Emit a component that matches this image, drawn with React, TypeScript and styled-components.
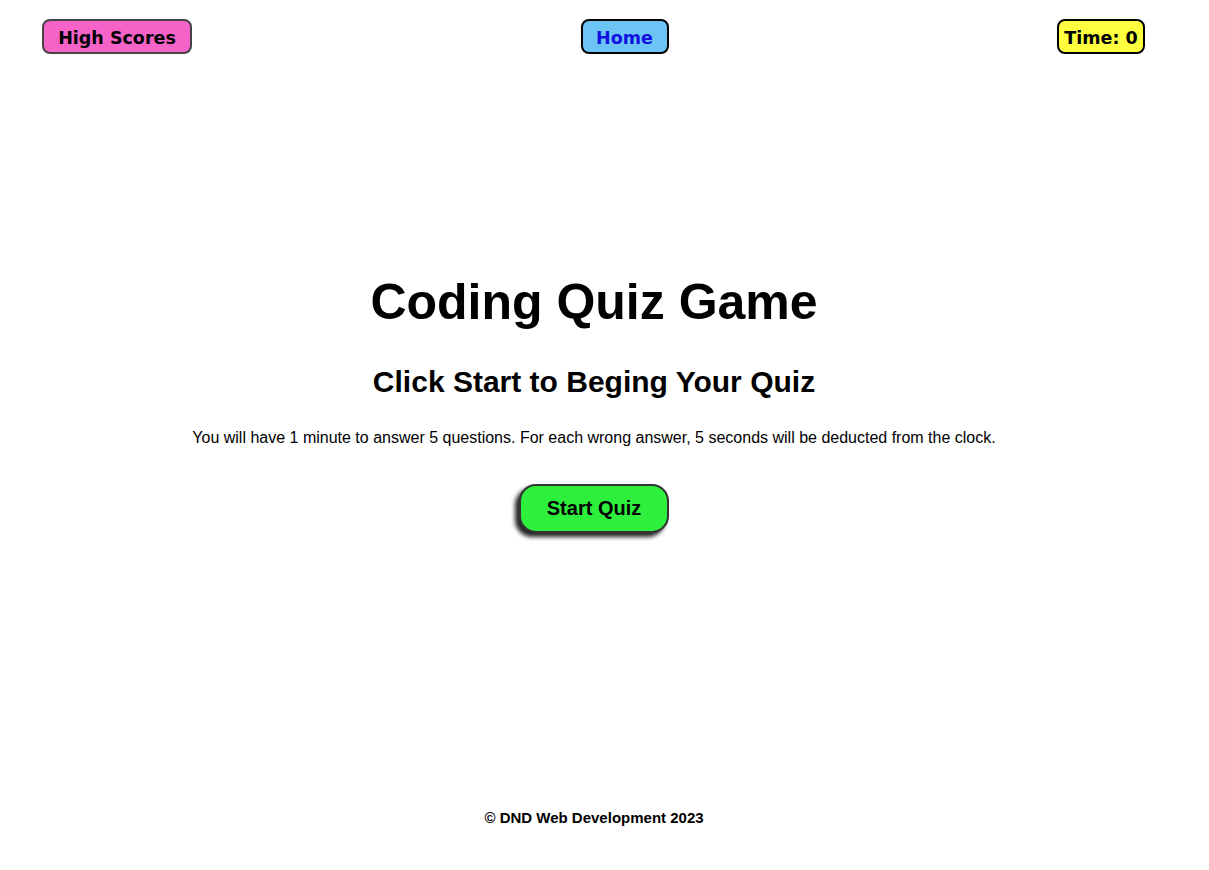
import React from "react";
import styled, { createGlobalStyle } from "styled-components";

const Global = createGlobalStyle`
  html, body { margin: 0; padding: 0; background: #fff; }
  body { font-family: "Liberation Sans", Arial, sans-serif; color: #000; }
`;

const Page = styled.div`
  min-height: 870px;
  display: flex;
  flex-direction: column;
`;

const Nav = styled.nav`
  display: flex;
  justify-content: space-between;
  align-items: center;
  padding: 19px 64px 0 42px;
`;

const NavButton = styled.button<{ $bg: string; $fg: string; $border: string; $w: number }>`
  font-family: "DejaVu Sans", Verdana, sans-serif;
  font-weight: bold;
  font-size: 17.5px;
  width: ${(p) => p.$w}px;
  height: 35px;
  padding: 3px 0 0;
  border-radius: 8px;
  border: 2px solid ${(p) => p.$border};
  background: ${(p) => p.$bg};
  color: ${(p) => p.$fg};
  cursor: pointer;
`;

const Main = styled.main`
  display: flex;
  flex-direction: column;
  align-items: center;
  padding-right: 21px;
  padding-top: 219px;
`;

const Title = styled.h1`
  font-size: 50px;
  font-weight: bold;
  margin: 0;
`;

const Subtitle = styled.h2`
  font-size: 30px;
  font-weight: bold;
  margin: 34px 0 0;
`;

const Intro = styled.p`
  font-size: 16px;
  margin: 30px 0 0;
`;

const StartButton = styled.button`
  margin-top: 37px;
  font-family: "Liberation Sans", Arial, sans-serif;
  font-weight: bold;
  font-size: 20px;
  width: 150px;
  height: 49px;
  border-radius: 17px;
  border: 2px solid #333;
  background: #2ef03c;
  color: #000;
  box-shadow: -4px 4px 4px rgba(0, 0, 0, 0.85);
  cursor: pointer;
`;

const Footer = styled.footer`
  margin-top: auto;
  padding: 0 21px 44px 0;
  text-align: center;
  font-size: 15px;
  font-weight: bold;
`;

export default function App() {
  return (
    <Page>
      <Global />
      <Nav>
        <NavButton $bg="#f562c8" $fg="#000" $border="#444" $w={150}>High Scores</NavButton>
        <NavButton $bg="#6cc4f5" $fg="#1010e0" $border="#000" $w={88}>Home</NavButton>
        <NavButton $bg="#ffff40" $fg="#000" $border="#000" $w={88}>Time: 0</NavButton>
      </Nav>
      <Main>
        <Title>Coding Quiz Game</Title>
        <Subtitle>Click Start to Beging Your Quiz</Subtitle>
        <Intro>
          You will have 1 minute to answer 5 questions. For each wrong answer, 5 seconds will be deducted from the clock.
        </Intro>
        <StartButton>Start Quiz</StartButton>
      </Main>
      <Footer>© DND Web Development 2023</Footer>
    </Page>
  );
}
